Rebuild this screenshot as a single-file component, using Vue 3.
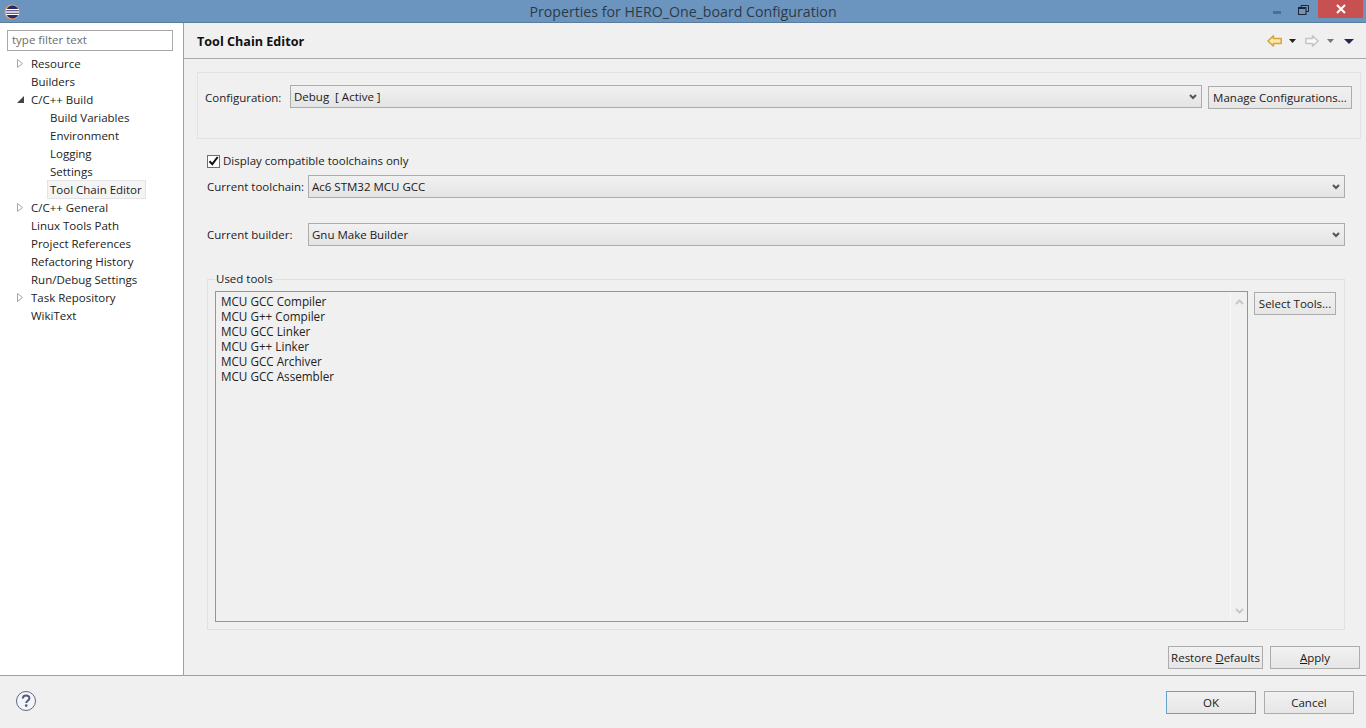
<script setup>
const tree = [
  { label: 'Resource', arrow: 'closed', depth: 0 },
  { label: 'Builders', depth: 0 },
  { label: 'C/C++ Build', arrow: 'open', depth: 0 },
  { label: 'Build Variables', depth: 1 },
  { label: 'Environment', depth: 1 },
  { label: 'Logging', depth: 1 },
  { label: 'Settings', depth: 1 },
  { label: 'Tool Chain Editor', depth: 1, selected: true },
  { label: 'C/C++ General', arrow: 'closed', depth: 0 },
  { label: 'Linux Tools Path', depth: 0 },
  { label: 'Project References', depth: 0 },
  { label: 'Refactoring History', depth: 0 },
  { label: 'Run/Debug Settings', depth: 0 },
  { label: 'Task Repository', arrow: 'closed', depth: 0 },
  { label: 'WikiText', depth: 0 },
]
const tools = ['MCU GCC Compiler', 'MCU G++ Compiler', 'MCU GCC Linker', 'MCU G++ Linker', 'MCU GCC Archiver', 'MCU GCC Assembler']
</script>

<template>
  <div class="window">
    <header class="titlebar">
      <svg class="app-icon" width="16" height="16" viewBox="0 0 16 16">
        <circle cx="8" cy="8" r="7.5" fill="#e8a55c" />
        <circle cx="8.5" cy="8" r="6.5" fill="#2c2a6b" />
        <path d="M2 5.6h13M2 8h13M2 10.4h13" stroke="#fff" stroke-width="1.3" />
      </svg>
      <div class="title">Properties for HERO_One_board Configuration</div>
      <div class="win-controls">
        <svg class="win-min" width="8" height="3" viewBox="0 0 8 3"><rect width="8" height="3" fill="#4a6f93" /></svg>
        <svg class="win-restore" width="11" height="10" viewBox="0 0 11 10">
          <path d="M3 2.5V.5h7.500v6H8" fill="none" stroke="#1c2530" />
          <rect x=".5" y="2.500" width="7.500" height="7" fill="none" stroke="#1c2530" stroke-width="1" />
          <path d="M1 3.500h6.500" stroke="#1c2530" />
        </svg>
        <div class="win-close">
          <svg width="10" height="10" viewBox="0 0 10 10"><path d="M1 1l8 8M9 1l-8 8" stroke="#fff" stroke-width="2" /></svg>
        </div>
      </div>
    </header>

    <div class="body">
      <aside class="sidebar">
        <div class="filter">type filter text</div>
        <ul class="tree">
          <li v-for="item in tree" :key="item.label" class="tree-row" :class="{ nested: item.depth === 1 }">
            <span class="arrow-slot">
              <svg v-if="item.arrow === 'closed'" width="6" height="9" viewBox="0 0 6 9"><path d="M.5.5l5 4-5 4z" fill="#fff" stroke="#a6a6a6" /></svg>
              <svg v-if="item.arrow === 'open'" width="7" height="7" viewBox="0 0 7 7"><path d="M7 0v7H0z" fill="#444" /></svg>
            </span>
            <span class="tree-label" :class="{ selected: item.selected }">{{ item.label }}</span>
          </li>
        </ul>
      </aside>

      <main class="content">
        <div class="page-head">
          <h1 class="page-title">Tool Chain Editor</h1>
          <div class="nav-icons">
            <svg class="nav-back" width="15" height="12" viewBox="0 0 15 12"><path d="M.9 6L6.500.9v2.600h7.700v5H6.500v2.600z" fill="#fde9a6" stroke="#d9a23c" stroke-width="1.500" stroke-linejoin="round" /></svg>
            <svg class="nav-drop" width="7" height="4" viewBox="0 0 7 4"><path d="M0 0h7L3.500 4z" fill="#222" /></svg>
            <svg class="nav-fwd" width="14" height="12" viewBox="0 0 14 12"><path d="M13.100 6L7.500.9v2.600H.8v5h6.700v2.600z" fill="#f8f8f8" stroke="#c4c4c4" stroke-width="1.500" stroke-linejoin="round" /></svg>
            <svg class="nav-drop2" width="7" height="4" viewBox="0 0 7 4"><path d="M0 0h7L3.500 4z" fill="#777" /></svg>
            <svg class="nav-menu" width="10" height="5" viewBox="0 0 10 5"><path d="M0 0h10L5 5z" fill="#29244f" /></svg>
          </div>
        </div>

        <div class="page-body">
          <section class="config-panel">
            <span class="label config-label">Configuration:</span>
            <div class="select config-select">
              <span>Debug&nbsp; [ Active ]</span>
              <svg class="chev" width="8" height="6" viewBox="0 0 8 6"><path d="M1 1l3 3 3-3" fill="none" stroke="#555" stroke-width="2" /></svg>
            </div>
            <button class="btn manage">Manage Configurations...</button>
          </section>

          <section class="toolchain">
            <label class="check-row">
              <span class="check">
                <svg width="11" height="10" viewBox="0 0 11 10"><path d="M1.500 5.200l2.800 3L9.700 1" fill="none" stroke="#111" stroke-width="2" /></svg>
              </span>
              <span>Display compatible toolchains only</span>
            </label>
            <div class="field-row first">
              <span class="label field-label">Current toolchain:</span>
              <div class="select">
                <span>Ac6 STM32 MCU GCC</span>
                <svg class="chev" width="8" height="6" viewBox="0 0 8 6"><path d="M1 1l3 3 3-3" fill="none" stroke="#555" stroke-width="2" /></svg>
              </div>
            </div>
            <div class="field-row second">
              <span class="label field-label">Current builder:</span>
              <div class="select">
                <span>Gnu Make Builder</span>
                <svg class="chev" width="8" height="6" viewBox="0 0 8 6"><path d="M1 1l3 3 3-3" fill="none" stroke="#555" stroke-width="2" /></svg>
              </div>
            </div>

            <fieldset class="used-tools">
              <legend>Used tools</legend>
              <div class="tools-inner">
                <div class="tool-list">
                  <ul class="tool-items">
                    <li v-for="t in tools" :key="t">{{ t }}</li>
                  </ul>
                  <div class="scrollbar">
                    <svg width="9" height="6" viewBox="0 0 9 6"><path d="M1 5l3.500-3.500L8 5" fill="none" stroke="#c8c8c8" stroke-width="2" /></svg>
                    <svg width="9" height="6" viewBox="0 0 9 6"><path d="M1 1l3.500 3.500L8 1" fill="none" stroke="#c8c8c8" stroke-width="2" /></svg>
                  </div>
                </div>
                <button class="btn select-tools">Select Tools...</button>
              </div>
            </fieldset>
          </section>

          <div class="page-actions">
            <button class="btn restore">Restore <u>D</u>efaults</button>
            <button class="btn apply"><u>A</u>pply</button>
          </div>
        </div>
      </main>
    </div>

    <footer class="footer">
      <svg class="help" width="20" height="20" viewBox="0 0 20 20">
        <circle cx="10" cy="10" r="9.500" fill="#f4f5f8" stroke="#5b6787" />
        <path d="M6.800 7.600c0-4.200 6.600-4.200 6.600-.3 0 2.400-3.200 2.400-3.200 4.700" fill="none" stroke="#50597c" stroke-width="2" />
        <circle cx="10.200" cy="14.600" r="1.300" fill="#50597c" />
      </svg>
      <div class="footer-btns">
        <button class="btn ok">OK</button>
        <button class="btn cancel">Cancel</button>
      </div>
    </footer>
  </div>
</template>

<style>
html, body { margin: 0; background: #f0f0f0; }
</style>

<style scoped>
.window {
  width: 1366px;
  height: 728px;
  display: flex;
  flex-direction: column;
  overflow: hidden;
  background: #f0f0f0;
  color: #222;
  font: 11.5px/16px "Open Sans", "Noto Sans", sans-serif;
}
ul { list-style: none; margin: 0; padding: 0; }

.titlebar {
  height: 22px;
  flex: none;
  display: flex;
  align-items: flex-start;
  background: #6b95bf;
  border-bottom: 1px solid #5a7d9e;
  position: relative;
}
.app-icon { margin: 4px 0 0 4px; }
.title {
  position: absolute;
  left: 0;
  right: 0;
  top: 3px;
  text-align: center;
  font-size: 14.2px;
  line-height: 18px;
  color: #2e3a46;
}
.win-controls { margin-left: auto; display: flex; align-items: flex-start; padding-right: 3px; }
.win-min { margin-top: 11px; }
.win-restore { margin: 5px 9px 0 17px; }
.win-close {
  width: 45px;
  height: 18px;
  background: #c75050;
  display: flex;
  align-items: center;
  justify-content: center;
}

.body { flex: 1; min-height: 0; display: flex; border-bottom: 1px solid #a0a0a0; }

.sidebar {
  width: 183px;
  flex: none;
  background: #fff;
  border-right: 1px solid #a0a0a0;
  padding-top: 7px;
}
.filter {
  margin-left: 7px;
  padding: 0 0 0 4px;
  height: 19px;
  width: 160px;
  border: 1px solid #a9a9a9;
  line-height: 18px;
  color: #6d6d6d;
}
.tree { margin-top: 3px; }
.tree-row { height: 18px; display: flex; align-items: center; padding-left: 17px; white-space: nowrap; }
.tree-row.nested { padding-left: 36px; }
.arrow-slot { width: 14px; flex: none; display: flex; align-items: center; }
.tree-label { padding: 0 3px 0 0; line-height: 17px; border: 1px solid transparent; margin-left: -1px; }
.nested .tree-label { margin-left: -3px; padding-left: 2px; }
.tree-label.selected { background: #f4f4f4; border-color: #e4e4e4; }

.content { flex: 1; min-width: 0; display: flex; flex-direction: column; }
.page-head {
  height: 35px;
  flex: none;
  display: flex;
  align-items: center;
  padding: 0 12px 0 13px;
  border-bottom: 1px solid #a9a9a9;
}
.page-title { margin: 3px 0 0; font-size: 12.6px; font-weight: 700; color: #111; line-height: 16px; }
.nav-icons { margin: 1px 0 0 auto; display: flex; align-items: center; }
.nav-drop { margin-left: 7px; }
.nav-fwd { margin-left: 9px; }
.nav-drop2 { margin-left: 8px; }
.nav-menu { margin-left: 10px; }

.page-body { flex: 1; min-height: 0; padding: 13px 5px 0 13px; display: flex; flex-direction: column; }

.config-panel {
  height: 65px;
  flex: none;
  border: 1px solid #e2e2e2;
  display: flex;
  align-items: flex-start;
}
.label { white-space: nowrap; }
.config-label { margin: 17px 0 0 7px; width: 85px; flex: none; }
.select {
  flex: 1;
  min-width: 0;
  height: 21px;
  border: 1px solid #acacac;
  background: linear-gradient(#f1f1f1, #e4e4e4);
  display: flex;
  align-items: center;
  padding: 0 4px 0 3px;
  line-height: 21px;
  color: #1a1a1a;
}
.chev { margin-left: auto; }
.config-select { margin-top: 12px; flex: none; width: 903px; }
.btn {
  box-sizing: border-box;
  height: 23px;
  padding: 0;
  font: inherit;
  color: #1a1a1a;
  background: linear-gradient(#f1f1f1, #e6e6e6);
  border: 1px solid #acacac;
  border-radius: 0;
  flex: none;
}
.manage { width: 144px; margin: 13px 0 0 6px; }

.toolchain { padding: 14px 16px 0 10px; flex: none; display: flex; flex-direction: column; }
.check-row { display: flex; align-items: center; height: 16px; }
.check {
  width: 11px;
  height: 11px;
  margin-right: 3px;
  border: 1px solid #6f6f6f;
  background: #fff;
  display: flex;
  align-items: center;
  justify-content: center;
}
.field-row { display: flex; align-items: center; }
.field-row.first { margin-top: 6px; }
.field-row.second { margin-top: 25px; }
.field-label { width: 101px; flex: none; }

.used-tools {
  margin: 26px 0 0;
  padding: 0 0 7px 7px;
  height: 358px;
  flex: none;
  box-sizing: border-box;
  border: 1px solid #e0e0e0;
  min-width: 0;
}
.used-tools legend { padding: 0 1px; line-height: 14px; }
.tools-inner { display: flex; align-items: flex-start; margin-top: 5px; padding-right: 8px; }
.tool-list {
  flex: 1;
  min-width: 0;
  height: 329px;
  border: 1px solid #66a2cc;
  display: flex;
}
.tool-items { flex: 1; padding: 2px 5px; line-height: 15px; font-size: 11.7px; }
.scrollbar {
  width: 17px;
  flex: none;
  border-left: 1px solid #f7f7f7;
  display: flex;
  flex-direction: column;
  justify-content: space-between;
  align-items: center;
  padding: 7px 0;
  box-sizing: border-box;
}
.select-tools { width: 82px; margin: 1px 0 0 6px; }

.page-actions { display: flex; justify-content: flex-end; gap: 7px; margin: 16px 1px 6px 0; }
.restore { width: 95px; }
.apply { width: 90px; }

.footer {
  height: 52px;
  flex: none;
  display: flex;
  align-items: flex-start;
  padding: 15px 12px 0 16px;
  box-sizing: border-box;
}
.footer-btns { margin-left: auto; display: flex; gap: 8px; }
.ok { width: 90px; border-color: #66a2cc; }
.cancel { width: 90px; }
</style>
